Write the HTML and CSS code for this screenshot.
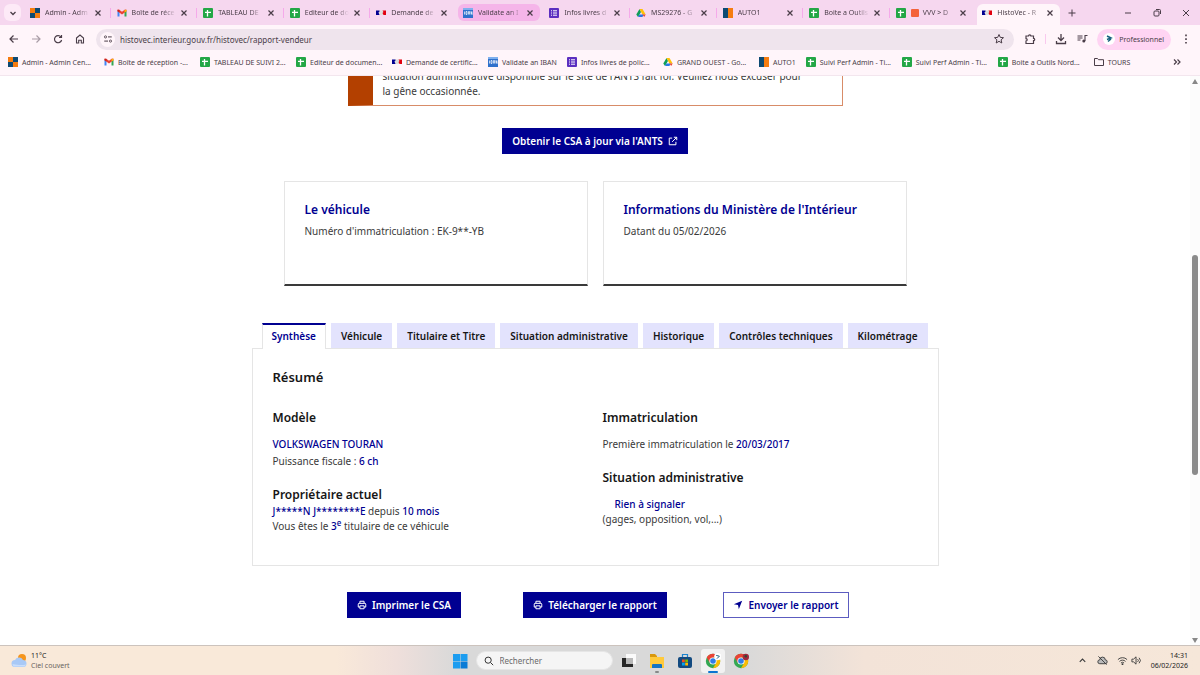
FILE: index.html
```html
<!DOCTYPE html>
<html lang="fr">
<head>
    <meta charset="UTF-8">
    <meta name="viewport" content="width=device-width, initial-scale=1.0">
    <title>HistoVec - Rapport vendeur</title>
    <link rel="stylesheet" href="styles.css">
</head>
<body>

    <svg class="sprite" aria-hidden="true">
        <symbol id="auto" viewBox="0 0 10 10"><path fill="#f57c10" d="M0 0h10v10H0z"/><path fill="#0d4a73" d="M5 0h5v5H5zM0 5h5v5H0z"/></symbol>
        <symbol id="auto1" viewBox="0 0 10 10"><path fill="#0d4a73" d="M0 0h5v10H0z"/><path fill="#f57c10" d="M5 0h5v10H5z"/></symbol>
        <symbol id="gmail" viewBox="0 0 10 10"><path fill="#4285f4" d="M.5 3v5.500h2V4z"/><path fill="#34a853" d="M9.500 3v5.500h-2V4z"/><path fill="#ea4335" d="M.5 3.200V1.800l1.500-.3 3 2.300 3-2.300 1.500.3v1.400L5 6.400z"/><path fill="#c5221f" d="M.5 1.800l2 .2v2.600l-2-1.400z"/><path fill="#fbbc04" d="M9.500 1.800l-2 .2v2.600l2-1.400z"/></symbol>
        <symbol id="sheet" viewBox="0 0 10 10"><rect width="10" height="10" rx="1" fill="#23a746"/><path d="M2 4.300h6M4.500 2v6.500" stroke="#fff" stroke-width="1.300"/></symbol>
        <symbol id="gouv" viewBox="0 0 10 10"><path fill="#ddd" d="M3 2.500h4V7H3z"/><path fill="#000091" d="M0 2.500h3.500v1l-1 1 1 2.500H0z"/><path fill="#e1000f" d="M6.500 2.500H10V7H7.500L6.500 5l1-1z"/></symbol>
        <symbol id="iban" viewBox="0 0 10 10"><path fill="#2f71cc" d="M0 0h10v10H0z"/><path fill="#7fb0ee" d="M0 0h10v2H0z"/><path d="M1.500 3.500v3M3 3.500v3h1v-3zM5.500 6.500v-3h1v3M8 6.500v-3l1 3v-3" stroke="#fff" stroke-width=".7" fill="none"/></symbol>
        <symbol id="form" viewBox="0 0 10 10"><rect width="10" height="10" rx="1" fill="#5b2fc0"/><path d="M2 2.800h1M4 2.800h4M2 5h1M4 5h4M2 7.200h1M4 7.200h4" stroke="#fff"/></symbol>
        <symbol id="drive" viewBox="0 0 10 10"><path fill="#0f9d58" d="M3.500 1L.3 6.500 2 9l3-5z"/><path fill="#ffc107" d="M3.500 1h3l3.200 5.500H6.400z"/><path fill="#2979e8" d="M3.500 6.500h4L6.500 9H2z"/><path fill="#ea4335" d="M6.400 6.500h3.300L8.200 9z"/></symbol>
        <symbol id="cross" viewBox="0 0 10 10"><path d="M2.500 2.500l5 5M7.500 2.500l-5 5" stroke="currentColor" stroke-width="1.200"/></symbol>
        <symbol id="printer" viewBox="0 0 12 12"><path d="M3.500 4V1.500h5V4M3.500 8.500h-2V5a1 1 0 011-1h7a1 1 0 011 1v3.500h-2M3.500 7h5v3.500h-5z" fill="none" stroke="currentColor" stroke-width="1.200"/></symbol>
        <symbol id="chrome" viewBox="0 0 20 20"><circle cx="10" cy="10" r="9" fill="#34a853"/><path fill="#ea4335" d="M2.200 5.500a9 9 0 0115.600 0H10L6 12.300z"/><path fill="#fbbc04" d="M17.800 5.500A9 9 0 0110 19l4-6.700-4-6.800z"/><circle cx="10" cy="10" r="4.500" fill="#fff"/><circle cx="10" cy="10" r="3.500" fill="#2f7de9"/></symbol>
    </svg>

    <header class="browser">
        <div class="tabstrip">
            <button class="chevron" aria-label="Rechercher dans les onglets"><svg viewBox="0 0 10 10"><path d="M2.500 4L5 6.500 7.500 4" fill="none" stroke="currentColor" stroke-width="1.300"/></svg></button>
            <div class="tabs">
                <div class="tab"><svg><use href="#auto"/></svg><span>Admin - Adm</span><button aria-label="Fermer"><svg><use href="#cross"/></svg></button></div>
                <div class="tab"><svg><use href="#gmail"/></svg><span>Boîte de réce</span><button aria-label="Fermer"><svg><use href="#cross"/></svg></button></div>
                <div class="tab"><svg><use href="#sheet"/></svg><span>TABLEAU DE</span><button aria-label="Fermer"><svg><use href="#cross"/></svg></button></div>
                <div class="tab"><svg><use href="#sheet"/></svg><span>Editeur de do</span><button aria-label="Fermer"><svg><use href="#cross"/></svg></button></div>
                <div class="tab plain"><svg><use href="#gouv"/></svg><span>Demande de</span><button aria-label="Fermer"><svg><use href="#cross"/></svg></button></div>
                <div class="tab plain hover"><svg><use href="#iban"/></svg><span>Validate an I</span><button aria-label="Fermer"><svg><use href="#cross"/></svg></button></div>
                <div class="tab"><svg><use href="#form"/></svg><span>Infos livres d</span><button aria-label="Fermer"><svg><use href="#cross"/></svg></button></div>
                <div class="tab"><svg><use href="#drive"/></svg><span>MS29276 - G</span><button aria-label="Fermer"><svg><use href="#cross"/></svg></button></div>
                <div class="tab"><svg><use href="#auto1"/></svg><span>AUTO1</span><button aria-label="Fermer"><svg><use href="#cross"/></svg></button></div>
                <div class="tab"><svg><use href="#sheet"/></svg><span>Boite a Outils</span><button aria-label="Fermer"><svg><use href="#cross"/></svg></button></div>
                <div class="tab plain"><svg><use href="#sheet"/></svg><span><i class="square"></i>VVV &gt; D</span><button aria-label="Fermer"><svg><use href="#cross"/></svg></button></div>
                <div class="tab plain active"><svg><use href="#gouv"/></svg><span>HistoVec - R</span><button aria-label="Fermer"><svg><use href="#cross"/></svg></button></div>
            </div>
            <button class="new-tab" aria-label="Nouvel onglet"><svg viewBox="0 0 10 10"><path d="M5 1.500v7M1.500 5h7" stroke="currentColor"/></svg></button>
            <div class="window-buttons">
                <button aria-label="Réduire"><svg viewBox="0 0 10 10"><path d="M2 5h6" stroke="currentColor"/></svg></button>
                <button aria-label="Restaurer"><svg viewBox="0 0 10 10"><rect x="2" y="3" width="5" height="5" rx="1" fill="none" stroke="currentColor"/><path d="M4 1.500h3.500a1 1 0 011 1V6" fill="none" stroke="currentColor"/></svg></button>
                <button aria-label="Fermer la fenêtre"><svg viewBox="0 0 10 10"><path d="M2 2l6 6M8 2L2 8" stroke="currentColor"/></svg></button>
            </div>
        </div>

        <div class="toolbar">
            <button aria-label="Retour"><svg viewBox="0 0 12 12"><path d="M10 6H2.500M5.500 2.500L2 6l3.500 3.500" fill="none" stroke="currentColor" stroke-width="1.200"/></svg></button>
            <button class="disabled" aria-label="Avancer"><svg viewBox="0 0 12 12"><path d="M2 6h7.500M6.500 2.500L10 6 6.500 9.500" fill="none" stroke="currentColor" stroke-width="1.200"/></svg></button>
            <button aria-label="Actualiser"><svg viewBox="0 0 12 12"><path d="M9 4A3.600 3.600 0 109.600 7M9.500 2v2.500H7" fill="none" stroke="currentColor" stroke-width="1.200"/></svg></button>
            <button aria-label="Accueil"><svg viewBox="0 0 12 12"><path d="M2.500 5L6 2l3.500 3v5H7.300V7.300H4.700V10H2.500z" fill="none" stroke="currentColor" stroke-width="1.100"/></svg></button>
            <div class="address">
                <i class="site"><svg viewBox="0 0 12 12"><path d="M6 3.500h4.500M1.500 8.500H6" stroke="currentColor" stroke-width="1.200"/><circle cx="3" cy="3.500" r="1.300" fill="none" stroke="currentColor"/><circle cx="9" cy="8.500" r="1.300" fill="none" stroke="currentColor"/></svg></i>
                <input type="text" aria-label="Adresse" value="histovec.interieur.gouv.fr/histovec/rapport-vendeur">
                <button aria-label="Ajouter aux favoris"><svg viewBox="0 0 12 12"><path d="M6 1.500l1.300 2.900 3.200.3-2.400 2.100.7 3.200L6 8.300 3.200 10l.7-3.200L1.500 4.700l3.200-.3z" fill="none" stroke="currentColor"/></svg></button>
            </div>
            <div class="tools">
                <button aria-label="Extensions"><svg viewBox="0 0 12 12"><path d="M2 3h2.500a1.200 1.200 0 012.400 0H9.500v2.300a1.200 1.200 0 010 2.400V10.500H2V8a1.200 1.200 0 000-2.400z" fill="none" stroke="currentColor" stroke-width="1.200"/></svg></button>
                <i class="rule"></i>
                <button aria-label="Téléchargements"><svg viewBox="0 0 12 12"><path d="M6 1v6M3 4.500L6 7.500l3-3M1.500 8v2.500h9V8" fill="none" stroke="currentColor" stroke-width="1.300"/></svg></button>
                <button aria-label="Contrôle multimédia"><svg viewBox="0 0 12 12"><path d="M1.500 3h5M1.500 5h5M1.500 7h3M9 8V2.500h2.500" fill="none" stroke="currentColor" stroke-width="1.100"/><circle cx="7.800" cy="8" r="1.500" fill="currentColor"/></svg></button>
                <button class="profile"><i><svg viewBox="0 0 12 12"><path d="M4 3l4 2-4 1.500M8 6L5 8.500" fill="none" stroke="#17607f" stroke-width="1.500"/></svg></i>Professionnel</button>
                <button aria-label="Menu"><svg viewBox="0 0 12 12"><path d="M6 1.500v1.700M6 5.200v1.700M6 8.900v1.700" stroke="currentColor" stroke-width="1.600"/></svg></button>
            </div>
        </div>

        <nav class="bookmarks">
            <a href="#"><svg><use href="#auto"/></svg>Admin - Admin Cen...</a>
            <a href="#"><svg><use href="#gmail"/></svg>Boîte de réception -...</a>
            <a href="#"><svg><use href="#sheet"/></svg>TABLEAU DE SUIVI 2...</a>
            <a href="#"><svg><use href="#sheet"/></svg>Editeur de documen...</a>
            <a href="#"><svg><use href="#gouv"/></svg>Demande de certific...</a>
            <a href="#" class="short"><svg><use href="#iban"/></svg>Validate an IBAN</a>
            <a href="#"><svg><use href="#form"/></svg>Infos livres de polic...</a>
            <a href="#"><svg><use href="#drive"/></svg>GRAND OUEST - Go...</a>
            <a href="#" class="short"><svg><use href="#auto1"/></svg>AUTO1</a>
            <a href="#"><svg><use href="#sheet"/></svg>Suivi Perf Admin - Ti...</a>
            <a href="#"><svg><use href="#sheet"/></svg>Suivi Perf Admin - Ti...</a>
            <a href="#"><svg><use href="#sheet"/></svg>Boite a Outils Nord...</a>
            <a href="#" class="short"><svg viewBox="0 0 10 10"><path d="M.5 8.500v-7h3l1 1.200h5v5.800z" fill="none" stroke="currentColor"/></svg>TOURS</a>
            <button class="more" aria-label="Autres favoris"><svg viewBox="0 0 10 10"><path d="M2 2.500L4.500 5 2 7.500M5.500 2.500L8 5 5.500 7.500" fill="none" stroke="currentColor" stroke-width="1.200"/></svg></button>
        </nav>
    </header>

    <div class="viewport">
        <main>
            <div class="alert">
                <p>situation administrative disponible sur le site de l'ANTS fait foi. Veuillez nous excuser pour<br>la gêne occasionnée.</p>
            </div>

            <a href="#" class="btn">Obtenir le CSA à jour via l'ANTS <svg viewBox="0 0 12 12"><path d="M5 2.500H1.500v8h8V7M7 1.500h3.500V5M10.500 1.500L5 7" fill="none" stroke="currentColor" stroke-width="1.200"/></svg></a>

            <div class="cards">
                <section class="card">
                    <h2>Le véhicule</h2>
                    <p>Numéro d'immatriculation : EK-9**-YB</p>
                </section>
                <section class="card">
                    <h2>Informations du Ministère de l'Intérieur</h2>
                    <p>Datant du 05/02/2026</p>
                </section>
            </div>

            <div class="report">
                <div class="report-tabs" role="tablist">
                    <button role="tab" class="selected" aria-selected="true">Synthèse</button>
                    <button role="tab">Véhicule</button>
                    <button role="tab">Titulaire et Titre</button>
                    <button role="tab">Situation administrative</button>
                    <button role="tab">Historique</button>
                    <button role="tab">Contrôles techniques</button>
                    <button role="tab">Kilométrage</button>
                </div>
                <div class="panel" role="tabpanel">
                    <h2>Résumé</h2>
                    <div class="columns">
                        <div>
                            <h3>Modèle</h3>
                            <p class="model"><b>VOLKSWAGEN TOURAN</b></p>
                            <p>Puissance fiscale : <b>6 ch</b></p>
                            <h3 class="owner">Propriétaire actuel</h3>
                            <p><b>J*****N J********E</b> depuis <b>10 mois</b></p>
                            <p>Vous êtes le <b>3<sup>e</sup></b> titulaire de ce véhicule</p>
                        </div>
                        <div>
                            <h3>Immatriculation</h3>
                            <p>Première immatriculation le <b>20/03/2017</b></p>
                            <h3>Situation administrative</h3>
                            <p class="status"><b>Rien à signaler</b></p>
                            <p>(gages, opposition, vol,...)</p>
                        </div>
                    </div>
                </div>
            </div>

            <div class="actions">
                <button class="btn"><svg><use href="#printer"/></svg> Imprimer le CSA</button>
                <button class="btn"><svg><use href="#printer"/></svg> Télécharger le rapport</button>
                <button class="btn outline"><svg viewBox="0 0 12 12"><path d="M1 5l10-4-4 10-1-5z" fill="currentColor"/></svg> Envoyer le rapport</button>
            </div>
        </main>
        <div class="scrollbar">
            <svg viewBox="0 0 10 10"><path d="M2 8l3-5 3 5z" fill="#888"/></svg>
            <div class="track"><div class="thumb"></div></div>
            <svg viewBox="0 0 10 10"><path d="M2 3l3 5 3-5z" fill="#888"/></svg>
        </div>
    </div>

    <footer class="taskbar">
        <div class="weather">
            <svg viewBox="0 0 16 16"><circle cx="11" cy="5" r="4" fill="#f5951d"/><path d="M4 14a3.500 3.500 0 010-7 4.500 4.500 0 018 0 3.500 3.500 0 010 7z" fill="#a9c9f6"/><path d="M3 13.500h10a3 3 0 002-2c-4 1-8 .5-13.500-.5a3 3 0 001.500 2.500z" fill="#c9defb"/></svg>
            <p><span>11°C</span><br>Ciel couvert</p>
        </div>
        <div class="apps">
            <button aria-label="Démarrer"><svg viewBox="0 0 16 16"><path fill="#1c9df0" d="M1 1h7v7H1zM8.500 1h7v7h-7zM1 8.500h7v7H1z"/><path fill="#0a7bd6" d="M8.500 8.500h7v7h-7z"/></svg></button>
            <label class="search"><svg viewBox="0 0 12 12"><circle cx="5" cy="5" r="3.700" fill="none" stroke="#333" stroke-width="1.200"/><path d="M8 8l3 3" stroke="#333" stroke-width="1.200"/></svg><input type="text" placeholder="Rechercher" aria-label="Rechercher"></label>
            <button aria-label="Vue des tâches"><svg viewBox="0 0 16 16"><path fill="#fafafa" d="M5 1h10v10H5z"/><path fill="#262626" d="M1 5h11v9H1z"/><path fill="#b8b8b8" d="M5 5h7v6H5z"/></svg></button>
            <button class="open" aria-label="Explorateur de fichiers"><svg viewBox="0 0 16 16"><path fill="#d9980d" d="M1 1h5l2 2v3H1z"/><path fill="#ffca3c" d="M1 4h14v11H1z"/><path fill="#1474c4" d="M3 15v-3a1 1 0 011-1h8a1 1 0 011 1v3z"/></svg></button>
            <button aria-label="Microsoft Store"><svg viewBox="0 0 16 16"><path d="M5.500 4V1.500h5V4" fill="none" stroke="#1b84cf" stroke-width="1.200"/><rect x="1" y="4" width="14" height="11" rx="2" fill="#124a80"/><path fill="#f25022" d="M5 6.500h2.800v2.800H5z"/><path fill="#7fba00" d="M8.200 6.500H11v2.800H8.200z"/><path fill="#00a4ef" d="M5 9.700h2.800v2.800H5z"/><path fill="#ffb900" d="M8.200 9.700H11v2.800H8.200z"/></svg></button>
            <button class="current" aria-label="Chrome Professionnel"><svg viewBox="0 0 20 20"><use href="#chrome"/><circle cx="16" cy="4.500" r="4.500" fill="#fff"/><path d="M14 3l4 1-3 3" fill="none" stroke="#17607f" stroke-width="1.200"/></svg></button>
            <button aria-label="Chrome"><svg viewBox="0 0 20 20"><use href="#chrome"/><circle cx="16" cy="5" r="4" fill="#a0283c"/><circle cx="16" cy="4" r="1.500" fill="#2c4a34"/></svg></button>
        </div>
        <div class="tray">
            <svg viewBox="0 0 12 12"><path d="M3 7.500l3-3 3 3" fill="none" stroke="currentColor" stroke-width="1.200"/></svg>
            <svg class="cloud" viewBox="0 0 12 12"><path d="M3 9.500a2 2 0 010-4.200 3 3 0 016 0 2 2 0 010 4.200z" fill="#bbb" stroke="currentColor"/><path d="M1.500 1.500l9 9" stroke="currentColor"/></svg>
            <svg viewBox="0 0 12 12"><path d="M1 5a7 7 0 0110 0M2.700 7a4.600 4.600 0 016.600 0M4.300 8.700a2.500 2.500 0 013.400 0" fill="none" stroke="currentColor"/><circle cx="6" cy="10" r="1" fill="currentColor"/></svg>
            <svg viewBox="0 0 12 12"><path d="M1 4.500h1.800L5.500 2v8L2.800 7.500H1zM7.200 4.500a2 2 0 010 3M8.800 3a4.200 4.200 0 010 6" fill="none" stroke="currentColor"/></svg>
            <p class="clock">14:31<br>06/02/2026</p>
        </div>
    </footer>

</body>
</html>
```
FILE: styles.css
```css
* {
    box-sizing: border-box;
}
body {
    margin: 0;
    height: 100vh;
    display: flex;
    flex-direction: column;
    font-family: "Noto Sans", sans-serif;
    font-size: 10px;
    color: #3a3a3a;
    background: #fff;
}
h2, h3, p {
    margin: 0;
}
button, input {
    margin: 0;
    padding: 0;
    border: 0;
    background: none;
    font: inherit;
    color: inherit;
}
a {
    color: inherit;
    text-decoration: none;
}
svg {
    display: block;
    flex-shrink: 0;
    width: 10px;
    height: 10px;
}
.sprite {
    position: absolute;
    width: 0;
    height: 0;
}

/* onglets du navigateur */
.browser {
    background: #fff5fa;
    border-bottom: 1px solid #f3e6ee;
    font-size: 7px;
    color: #4a3d48;
}
.tabstrip {
    display: flex;
    align-items: center;
    height: 25px;
    padding-left: 4px;
    background: #f6d7ef;
}
.chevron {
    flex-shrink: 0;
    display: grid;
    place-items: center;
    width: 17px;
    height: 17px;
    margin-right: 4px;
    border-radius: 6px;
    background: #fdeaf7;
}
.tabs {
    flex: 1;
    min-width: 0;
    display: flex;
    gap: 4px;
    align-self: stretch;
    padding-top: 4px;
}
.tab {
    position: relative;
    flex: 1;
    min-width: 0;
    display: flex;
    align-items: center;
    height: 17px;
    padding: 0 5px;
    border-radius: 6px;
}
.tab::after {
    content: "";
    position: absolute;
    right: -3px;
    width: 1px;
    height: 10px;
    background: #f5aaea;
}
.tab.plain::after {
    display: none;
}
.tab span {
    flex: 1;
    margin: 0 3px 0 5px;
    overflow: hidden;
    white-space: nowrap;
    -webkit-mask-image: linear-gradient(to right, #000 70%, transparent);
    mask-image: linear-gradient(to right, #000 70%, transparent);
}
.tab.hover {
    background: #f5b5e9;
}
.tab.active {
    height: 21px;
    padding-bottom: 4px;
    border-radius: 6px 6px 0 0;
    background: #fff5fa;
}
.square {
    display: inline-block;
    width: 8px;
    height: 8px;
    margin-right: 4px;
    border-radius: 1px;
    vertical-align: middle;
    background: #f4623a;
}
.new-tab {
    margin: 0 46px 0 7px;
}
.window-buttons {
    display: flex;
    gap: 19px;
    padding-right: 9px;
}

/* barre d'adresse */
.toolbar {
    display: flex;
    align-items: center;
    gap: 10px;
    height: 28px;
    padding: 0 8px;
}
.toolbar svg {
    width: 12px;
    height: 12px;
}
.disabled {
    color: #a99ca6;
}
.address {
    flex: 1;
    display: flex;
    align-items: center;
    height: 21px;
    padding: 0 9px 0 4px;
    border-radius: 11px;
    background: #efe4ed;
    font-size: 8px;
}
.address input {
    flex: 1;
    margin-left: 5px;
}
.site {
    display: grid;
    place-items: center;
    width: 15px;
    height: 15px;
    border-radius: 50%;
    background: #fff5fa;
}
.site svg {
    width: 10px;
    height: 10px;
}
.tools {
    display: flex;
    align-items: center;
    gap: 9px;
}
.rule {
    width: 1px;
    height: 10px;
    background: #f9c9ee;
}
.profile {
    display: flex;
    align-items: center;
    gap: 4px;
    height: 21px;
    padding: 0 7px 0 6px;
    border-radius: 11px;
    background: #ffd4f3;
}
.profile i {
    border-radius: 50%;
    background: #fff;
}

/* favoris */
.bookmarks {
    display: flex;
    align-items: center;
    height: 22px;
    padding: 0 8px 4px;
    white-space: nowrap;
}
.bookmarks a {
    display: flex;
    align-items: center;
    gap: 4px;
    width: 96px;
}
.bookmarks .short {
    width: auto;
    padding-right: 10px;
}
.more {
    margin-left: auto;
    margin-right: 10px;
}

/* page HistoVec */
.viewport {
    flex: 1;
    min-height: 0;
    display: flex;
}
main {
    flex: 1;
    overflow: hidden;
    display: flex;
    flex-direction: column;
    align-items: center;
    line-height: 15px;
}
.alert {
    width: 495px;
    margin-top: -7px;
    padding: 0 10px 6px;
    border: 1px solid #d88c68;
    border-top: 0;
    border-left: 25px solid #b34000;
}
.btn {
    display: flex;
    align-items: center;
    gap: 5px;
    height: 26px;
    padding: 0 10px;
    font-weight: 600;
    color: #fff;
    background: #000091;
}
.btn.outline {
    padding: 0 9px;
    color: #000091;
    background: #fff;
    border: 1px solid #5c5cc0;
}
.alert + .btn {
    margin: 22px 0 27px;
}
.cards {
    display: grid;
    grid-template-columns: 1fr 1fr;
    gap: 15px;
    width: 623px;
}
.card {
    height: 105px;
    padding: 19px 20px;
    border: 1px solid #e5e5e5;
    border-bottom: 2px solid #3a3a3a;
}
.card h2 {
    margin-bottom: 5px;
    font-size: 12px;
    color: #000091;
}
h2, h3 {
    font-size: 13px;
    line-height: 18px;
    font-weight: 600;
    color: #161616;
}
h3 {
    font-size: 12px;
}
.report {
    width: 687px;
    margin: 37px 0 26px;
}
.report-tabs {
    position: relative;
    display: flex;
    gap: 5px;
    padding: 0 10px;
    margin-bottom: -1px;
}
.report-tabs button {
    height: 25px;
    padding: 1px 10px 0;
    margin-bottom: 1px;
    font-weight: 600;
    white-space: nowrap;
    color: #161616;
    background: #e3e3fd;
}
.report-tabs .selected {
    height: 26px;
    margin-bottom: 0;
    color: #000091;
    background: #fff;
    border: 1px solid #e5e5e5;
    border-top: 2px solid #000091;
    border-bottom: 0;
    padding: 0 9px 2px;
}
.panel {
    padding: 19px 20px 31px;
    border: 1px solid #e5e5e5;
}
.columns {
    display: grid;
    grid-template-columns: 1fr 1fr;
    gap: 15px;
    margin-top: 23px;
}
.columns h3 {
    margin-bottom: 10px;
}
.columns p + h3 {
    margin-top: 17px;
}
.columns .owner {
    margin-bottom: 0;
}
.columns b {
    font-weight: 500;
    color: #000091;
}
.model {
    margin-bottom: 2px;
}
.status {
    padding-left: 12px;
}
sup {
    font-size: 8px;
    line-height: 0;
}
.actions {
    display: grid;
    grid-template-columns: repeat(3, 191px);
    justify-items: center;
}
.scrollbar {
    display: flex;
    flex-direction: column;
    width: 10px;
    background: #fcfcfc;
}
.track {
    flex: 1;
    padding: 0 2px;
}
.thumb {
    height: 40%;
    margin-top: 169px;
    border-radius: 3px;
    background: #8b8b8b;
}

/* barre des tâches */
.taskbar {
    display: grid;
    grid-template-columns: 1fr auto 1fr;
    align-items: center;
    height: 30px;
    border-top: 1px solid #ccc3bd;
    background: linear-gradient(to right, #f9e9d9 28%, #efdfdb 33%, #d9d9d9 38%, #d9d9d9 62%, #f3e3d8 72%, #f6e7d9);
    font-size: 7px;
    line-height: 10px;
}
.weather {
    display: flex;
    align-items: center;
    gap: 4px;
    padding-left: 11px;
    color: #6b6460;
}
.weather span {
    color: #222;
}
.weather svg {
    width: 16px;
    height: 16px;
}
.apps {
    display: flex;
    align-items: center;
    gap: 4px;
}
.apps button {
    position: relative;
    display: grid;
    place-items: center;
    width: 24px;
    height: 24px;
}
.apps button svg {
    width: 16px;
    height: 16px;
}
.search {
    display: flex;
    align-items: center;
    gap: 6px;
    width: 137px;
    height: 19px;
    padding: 0 7px;
    border: 1px solid #e6e6e6;
    border-radius: 10px;
    background: #f5f5f5;
    font-size: 8px;
}
.search input {
    width: 100%;
}
.search input::placeholder {
    color: #6a6a6a;
}
.apps .current {
    border-radius: 3px;
    background: #f2f2f2;
}
.open::after, .current::after {
    content: "";
    position: absolute;
    bottom: 0;
    width: 4px;
    height: 2px;
    border-radius: 1px;
    background: #888;
}
.current::after {
    width: 10px;
    background: #0a74d1;
}
.tray {
    display: flex;
    align-items: center;
    justify-content: flex-end;
    gap: 3px;
    padding-right: 12px;
}
.tray svg {
    width: 11px;
    height: 11px;
}
.cloud {
    margin: 0 6px;
}
.clock {
    margin-left: 6px;
    text-align: right;
    color: #222;
}
```
